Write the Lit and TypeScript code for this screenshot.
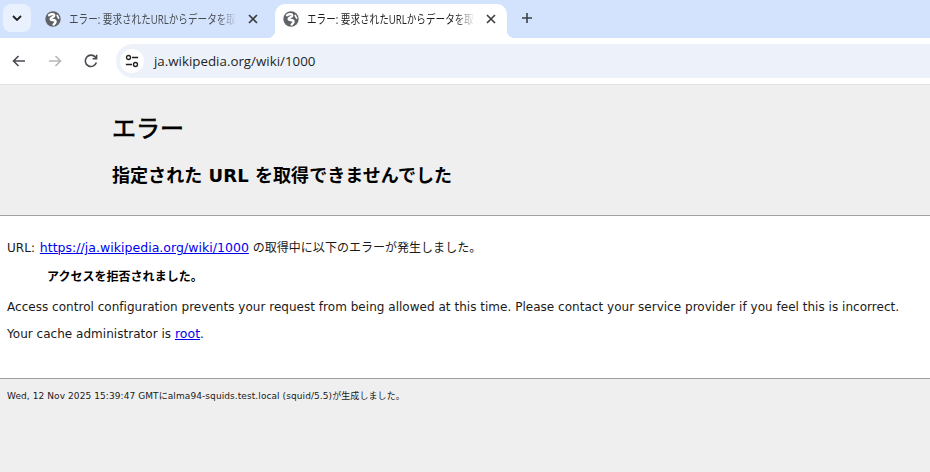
import { LitElement, html, css, svg } from "lit";
import { customElement } from "lit/decorators.js";

const globe = svg`<svg class="globe" viewBox="0 0 16 16" width="16" height="16"><circle cx="8" cy="8" r="7.7" fill="#5f6368"/><path d="M4 4.2 C6.5 2.8 9.6 2.8 9.2 4.8 C8.8 6.4 5.6 6.2 5.6 8 C5.6 9.4 8.8 8.6 10.2 9.6 C11.4 10.6 10 12.6 8.6 13.6" stroke="#fff" stroke-width="2.3" fill="none" stroke-linecap="round"/><path d="M12.2 4.4 L13.6 7.2" stroke="#fff" stroke-width="1.6" stroke-linecap="round"/></svg>`;
const close = svg`<svg viewBox="0 0 10 10" width="10" height="10"><path d="M1 1 L9 9 M9 1 L1 9" stroke="#3c4043" stroke-width="1.7" fill="none"/></svg>`;

@customElement("app-root")
export class AppRoot extends LitElement {
  static styles = css`
    :host { display: block; width: 930px; height: 472px; overflow: hidden; background: #efefef; font-family: "DejaVu Sans", "Noto Sans CJK JP", sans-serif; }
    .tabstrip { height: 38px; background: #d3e3fd; display: flex; align-items: flex-start; box-sizing: border-box; padding: 4px 0 0 3px; }
    .chev { width: 28px; height: 28px; border-radius: 8px; background: #e9f1fe; display: flex; align-items: center; justify-content: center; flex: none; }
    .tab { position: relative; width: 232px; height: 34px; box-sizing: border-box; display: flex; align-items: center; padding: 0 0 4px 8px; flex: none; font: 12px "Open Sans", "Noto Sans CJK JP", sans-serif; color: #474b50; }
    .tab.first { margin: 0 6px; }
    .tab.active { background: #fff; border-radius: 10px 10px 0 0; color: #1f1f1f; }
    .tab.active::before, .tab.active::after { content: ""; position: absolute; bottom: 0; width: 8px; height: 8px; }
    .tab.active::before { left: -8px; background: radial-gradient(circle at 0 0, transparent 8px, #fff 8.5px); }
    .tab.active::after { right: -8px; background: radial-gradient(circle at 100% 0, transparent 8px, #fff 8.5px); }
    .globe { flex: none; margin-right: 8px; }
    .title { width: 168px; flex: none; white-space: nowrap; overflow: hidden; -webkit-mask-image: linear-gradient(90deg, #000 88%, transparent); mask-image: linear-gradient(90deg, #000 88%, transparent); }
    .title span { display: inline-block; transform: scaleX(0.8); transform-origin: 0 50%; }
    .x { flex: none; margin-left: 11px; display: flex; }
    .plus { margin: 8px 0 0 14px; display: flex; }
    .toolbar { height: 46px; background: #fff; border-bottom: 1px solid #e3e3e3; display: flex; align-items: center; padding: 0 0 0 11px; }
    .nav { width: 16px; height: 16px; margin-right: 20px; flex: none; }
    .omni { margin-left: -3px; flex: 1; height: 34px; border-radius: 17px 0 0 17px; background: #edf2fa; display: flex; align-items: center; padding-left: 4px; font: 13.33px "Open Sans", sans-serif; color: #1f1f1f; }
    .tune { width: 24px; height: 24px; border-radius: 50%; background: #fff; display: flex; align-items: center; justify-content: center; margin-right: 10px; }
    .head { background: #efefef; height: 130px; box-sizing: border-box; padding: 26px 0 0 112px; color: #000; }
    h1 { margin: 0; font-size: 24px; line-height: 36px; font-weight: 400; -webkit-text-stroke: 0.7px #000; }
    h2 { margin: 17px 0 0; font-size: 18px; line-height: 24px; font-weight: 700; letter-spacing: 0.05px; }
    .rule { height: 1px; background: #a0a0a0; }
    .body { background: #fff; height: 162px; box-sizing: border-box; padding: 23px 7px 0; font-size: 12px; color: #1a1a1a; letter-spacing: 0.027px; }
    .body p { margin: 0; line-height: 18px; white-space: nowrap; }
    .body a { color: #0000ee; text-decoration: underline; font-size: 12.5px; }
    .link-url { margin-left: 1px; }
    .denied { margin: 11px 0 0 40px !important; font-weight: 700; color: #000; }
    .acc { margin-top: 12px !important; }
    .admin { margin-top: 9px !important; }
    .foot { background: #efefef; padding: 10px 7px 0; font-size: 9px; line-height: 14px; color: #1a1a1a; white-space: nowrap; letter-spacing: 0.08px; }
  `;

  render() {
    return html`
      <div class="tabstrip">
        <div class="chev"><svg viewBox="0 0 10 6" width="10" height="6"><path d="M1 1 L5 5 L9 1" stroke="#1f1f1f" stroke-width="1.8" fill="none"/></svg></div>
        <div class="tab first">${globe}<span class="title"><span>エラー: 要求されたURLからデータを取</span></span><span class="x">${close}</span></div>
        <div class="tab active">${globe}<span class="title"><span>エラー: 要求されたURLからデータを取</span></span><span class="x">${close}</span></div>
        <div class="plus"><svg viewBox="0 0 12 12" width="12" height="12"><path d="M6 1 V11 M1 6 H11" stroke="#3c4043" stroke-width="1.6" fill="none"/></svg></div>
      </div>
      <div class="toolbar">
        <svg class="nav" viewBox="0 0 16 16"><path d="M14 8 H3 M7.5 3 L2.5 8 L7.5 13" stroke="#474b50" stroke-width="1.6" fill="none"/></svg>
        <svg class="nav" viewBox="0 0 16 16"><path d="M2 8 H13 M8.5 3 L13.5 8 L8.5 13" stroke="#b4b6b9" stroke-width="1.6" fill="none"/></svg>
        <svg class="nav" viewBox="0 0 16 16"><path d="M13.4 9.6 A5.7 5.7 0 1 1 12.4 4.2 L13.4 5.4 M13.6 1.8 V5.8 H9.6" stroke="#474b50" stroke-width="1.6" fill="none"/></svg>
        <div class="omni">
          <span class="tune"><svg viewBox="0 0 16 16" width="14" height="14"><path d="M8 4 H15 M1 12 H8" stroke="#1f1f1f" stroke-width="1.5" fill="none"/><circle cx="4" cy="4" r="2.3" stroke="#1f1f1f" stroke-width="1.5" fill="none"/><circle cx="12" cy="12" r="2.3" stroke="#1f1f1f" stroke-width="1.5" fill="none"/></svg></span>
          <span>ja.wikipedia.org/wiki/1000</span>
        </div>
      </div>
      <div class="head"><h1>エラー</h1><h2>指定された URL を取得できませんでした</h2></div>
      <div class="rule"></div>
      <div class="body">
        <p>URL: <a class="link-url" href="#">https://ja.wikipedia.org/wiki/1000</a> の取得中に以下のエラーが発生しました。</p>
        <p class="denied">アクセスを拒否されました。</p>
        <p class="acc">Access control configuration prevents your request from being allowed at this time. Please contact your service provider if you feel this is incorrect.</p>
        <p class="admin">Your cache administrator is <a href="#">root</a>.</p>
      </div>
      <div class="rule"></div>
      <div class="foot">Wed, 12 Nov 2025 15:39:47 GMTにalma94-squids.test.local (squid/5.5)が生成しました。</div>
    `;
  }
}
